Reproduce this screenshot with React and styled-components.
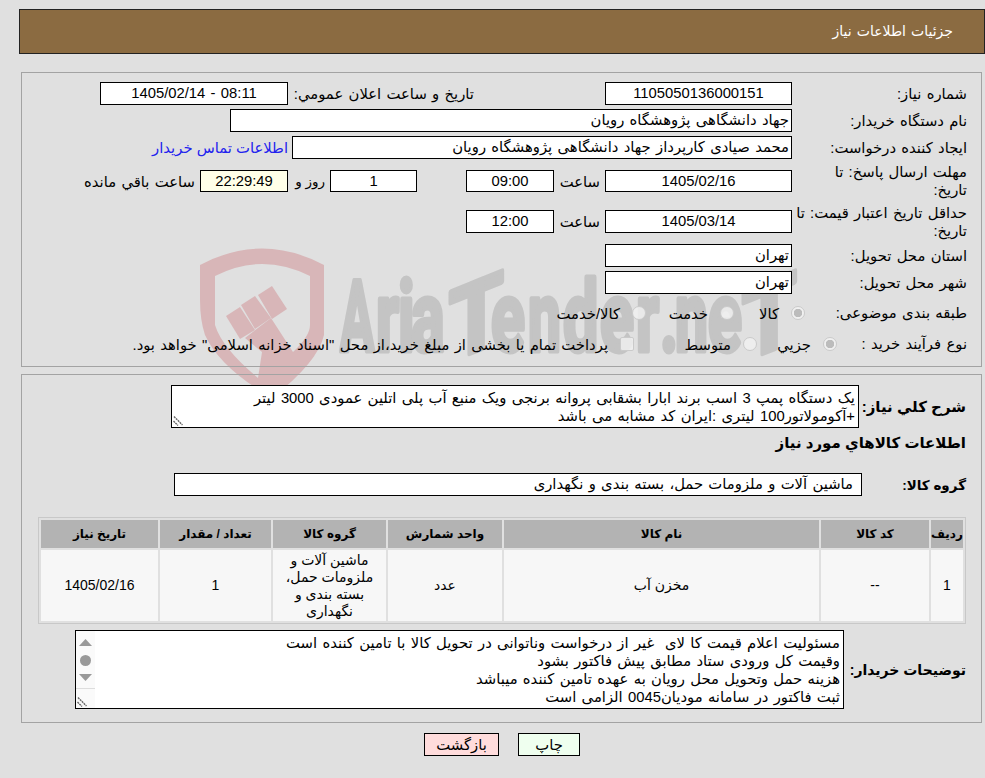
import styled, { createGlobalStyle } from "styled-components";

const GlobalStyle = createGlobalStyle`
  html, body { margin:0; padding:0; background:#e0e0e0; }
  body { font-family:"Liberation Sans","DejaVu Sans",sans-serif; font-size:14.8px; word-spacing:1.2px; color:#000; }
`;

const goods = [
  { row: "1", code: "--", name: "مخزن آب", unit: "عدد", group: "ماشین آلات و ملزومات حمل، بسته بندی و نگهداری", count: "1", date: "1405/02/16" },
];

// حروف لوگو
const logoLetters = [
  { c: "A", x: 340, sx: 0.52 },
  { c: "r", x: 376, sx: 0.64 },
  { c: "i", x: 398, sx: 0.64 },
  { c: "a", x: 411, sx: 0.64 },
  { c: "e", x: 491, sx: 0.64 },
  { c: "n", x: 528, sx: 0.6 },
  { c: "d", x: 563, sx: 0.64 },
  { c: "e", x: 600, sx: 0.64 },
  { c: "r", x: 636, sx: 0.64 },
  { c: ".", x: 660, sx: 0.64 },
  { c: "n", x: 675, sx: 0.6 },
  { c: "e", x: 708, sx: 0.64 },
];

const App = () => (
  <Page dir="rtl">
    <GlobalStyle />
    <Watermark />
    <TitleBar>جزئیات اطلاعات نیاز</TitleBar>
    <InfoPanel>
      <Row $h={27}>
        <Label>شماره نیاز:</Label>
        <Box $w={187}>1105050136000151</Box>
        <AnnounceLabel>تاریخ و ساعت اعلان عمومي:</AnnounceLabel>
        <Box $w={188}>08:11 - 1405/02/14</Box>
      </Row>
      <Row $h={27}>
        <Label>نام دستگاه خریدار:</Label>
        <Box $w={562} $start>جهاد دانشگاهی پژوهشگاه رویان</Box>
      </Row>
      <Row $h={27}>
        <Label>ایجاد کننده درخواست:</Label>
        <Box $w={500} $start>محمد صیادی کارپرداز جهاد دانشگاهی پژوهشگاه رویان</Box>
        <ContactLink href="#">اطلاعات تماس خریدار</ContactLink>
      </Row>
      <Row $h={40}>
        <Label>مهلت ارسال پاسخ: تا<br />تاریخ:</Label>
        <Box $w={187} $h={22}>1405/02/16</Box>
        <HourLabel>ساعت</HourLabel>
        <Box $w={88} $h={22}>09:00</Box>
        <Spacer $w={49} />
        <Box $w={87} $h={22}>1</Box>
        <DayLabel>روز و</DayLabel>
        <Box $w={88} $h={22} $tint>22:29:49</Box>
        <RemainLabel>ساعت باقي مانده</RemainLabel>
      </Row>
      <Row $h={41}>
        <Label>حداقل تاریخ اعتبار قیمت: تا<br />تاریخ:</Label>
        <Box $w={187}>1405/03/14</Box>
        <HourLabel>ساعت</HourLabel>
        <Box $w={88}>12:00</Box>
      </Row>
      <Row $h={27}>
        <Label>استان محل تحویل:</Label>
        <Box $w={187} $start>تهران</Box>
      </Row>
      <Row $h={27}>
        <Label>شهر محل تحویل:</Label>
        <Box $w={187} $start>تهران</Box>
      </Row>
      <Row $h={34}>
        <Label>طبقه بندی موضوعی:</Label>
        <OptionList $pull={13}>
          <Option $w={71}><Radio defaultChecked disabled name="kind" /><span>کالا</span></Option>
          <Option $w={88}><Radio disabled name="kind" /><span>خدمت</span></Option>
          <Option><Radio disabled name="kind" /><span>کالا/خدمت</span></Option>
        </OptionList>
      </Row>
      <Row $h={28}>
        <Label>نوع فرآیند خرید :</Label>
        <OptionList $pull={45}>
          <Option $w={80}><Radio defaultChecked disabled name="proc" /><span>جزيي</span></Option>
          <Option $w={123}><Radio disabled name="proc" /><span>متوسط</span></Option>
          <Option><Check disabled /><span>پرداخت تمام یا بخشی از مبلغ خرید،از محل "اسناد خزانه اسلامی" خواهد بود.</span></Option>
        </OptionList>
      </Row>
    </InfoPanel>

    <DetailPanel>
      <DescRow>
        <BoldLabel $w={107}>شرح كلي نياز:</BoldLabel>
        <TextBox $w={688} $h={43}>
          <div>یک دستگاه پمپ 3 اسب برند ابارا بشقابی پروانه برنجی ویک منبع آب پلی اتلین عمودی 3000 لیتر</div>
          <div>+آکومولاتور100 لیتری :ایران کد مشابه می باشد</div>
          <Grip />
        </TextBox>
      </DescRow>
      <SectionTitle>اطلاعات كالاهاي مورد نياز</SectionTitle>
      <GroupRow>
        <BoldLabel $w={104} $size={13.5}>گروه کالا:</BoldLabel>
        <GroupBox>ماشین آلات و ملزومات حمل، بسته بندی و نگهداری</GroupBox>
      </GroupRow>
      <GoodsTable>
        <colgroup>
          <col style={{ width: 32 }} />
          <col style={{ width: 108 }} />
          <col style={{ width: 315 }} />
          <col style={{ width: 114 }} />
          <col style={{ width: 113 }} />
          <col style={{ width: 111 }} />
          <col style={{ width: 117 }} />
        </colgroup>
        <thead>
          <tr>
            <th>ردیف</th>
            <th>کد کالا</th>
            <th>نام کالا</th>
            <th>واحد شمارش</th>
            <th>گروه کالا</th>
            <th>تعداد / مقدار</th>
            <th>تاریخ نیاز</th>
          </tr>
        </thead>
        <tbody>
          {goods.map((item) => (
            <tr key={item.row}>
              <td>{item.row}</td>
              <td>{item.code}</td>
              <td>{item.name}</td>
              <td>{item.unit}</td>
              <td>{item.group}</td>
              <td>{item.count}</td>
              <td>{item.date}</td>
            </tr>
          ))}
        </tbody>
      </GoodsTable>
      <BuyerRow>
        <BoldLabel $w={122} $size={14}>توضیحات خریدار:</BoldLabel>
        <TextBox $w={769} $h={79}>
          <div>مسئولیت اعلام قیمت کا لای  غیر از درخواست وناتوانی در تحویل کالا با تامین کننده است</div>
          <div>وقیمت کل ورودی ستاد مطابق پیش فاکتور بشود</div>
          <div>هزینه حمل وتحویل محل رویان به عهده تامین کننده میباشد</div>
          <div>ثبت فاکتور در سامانه مودیان0045 الزامی است</div>
          <FakeScroll>
            <svg width="19" height="58" viewBox="0 0 19 58">
              <path d="M3 15 L9.5 8 L16 15 Z" fill="#999" />
              <circle cx="9.5" cy="29.5" r="5.5" fill="#999" />
              <path d="M3 43 L16 43 L9.5 50 Z" fill="#999" />
            </svg>
            <Grip />
          </FakeScroll>
        </TextBox>
      </BuyerRow>
    </DetailPanel>

    <Actions>
      <ActionButton $bg="#efffef" $w={62}>چاپ</ActionButton>
      <ActionButton $bg="#ffdcdc" $w={75}>بازگشت</ActionButton>
    </Actions>
  </Page>
);

export default App;

// دستگیره تغییر اندازه
const Grip = () => (
  <GripSvg width="10" height="10" viewBox="0 0 10 10">
    <path d="M1 0.5 L9.5 9" stroke="#666" strokeWidth="1.4" strokeDasharray="2 .7" />
    <path d="M0.5 5 L5 9.5" stroke="#666" strokeWidth="1.4" strokeDasharray="2 .7" />
  </GripSvg>
);

// لوگوی پس زمینه
const Watermark = () => (
  <WatermarkSvg width="985" height="400" viewBox="0 0 985 400" aria-hidden="true">
    <g fill="#d8b6b8">
      <path fillRule="evenodd" d="M200 265 Q262 232 324 265 L324 335 Q318 362 272 398 Q220 368 205 335 Q200 320 200 300 Z M215 276 L215 325 Q222 348 258 378 L262 352 L245 338 L271 318 L293 352 Q310 336 310 325 L310 276 Q262 252 215 276 Z" />
      <path d="M226 316 L240 307 L255 330 L240 339 Z" />
      <path d="M241 305 L255 296 L271 318 L255 329 Z" />
      <path d="M258 295 L272 286 L287 309 L272 319 Z" />
    </g>
    <g direction="ltr" fill="#c4c4c4" stroke="#c4c4c4" strokeWidth="5" strokeLinejoin="round" fontFamily="Roboto, sans-serif" fontWeight="700" fontSize="98">
      {logoLetters.map((l, idx) => (
        <text key={idx} transform={`translate(${l.x} 351) scale(${l.sx} 1)`}>{l.c}</text>
      ))}
      <text transform="translate(449 362) skewY(-22) scale(.9 1)">T</text>
      <text transform="translate(742 362) skewY(-22) scale(.9 1)">T</text>
    </g>
  </WatermarkSvg>
);

const Page = styled.div`
  position:relative;
  width:985px;
  height:778px;
  overflow:hidden;
  padding-top:9px;
  box-sizing:border-box;
`;
const WatermarkSvg = styled.svg`
  position:absolute;
  top:0;
  left:0;
`;
const TitleBar = styled.div`
  position:relative;
  box-sizing:border-box;
  height:45px;
  margin:0 0 0 19px;
  padding-right:31px;
  border:1px solid #222;
  background:#8b6b41;
  color:#fff;
  font-size:14px;
  line-height:43px;
`;
const Panel = styled.section`
  position:relative;
  box-sizing:border-box;
  width:961px;
  margin-left:21px;
  margin-right:3px;
  border:1px solid #a3a3a3;
`;
const InfoPanel = styled(Panel)`
  height:295px;
  margin-top:18px;
  padding:7px 0 0;
`;
const DetailPanel = styled(Panel)`
  height:349px;
  margin-top:7px;
  padding:0 15px 0 14px;
`;
const Row = styled.div`
  display:flex;
  align-items:center;
  height:${(p) => p.$h}px;
`;
const Label = styled.div`
  box-sizing:border-box;
  flex:none;
  width:189px;
  padding-right:14px;
  line-height:18px;
  text-align:right;
`;
const Box = styled.div`
  flex:none;
  box-sizing:border-box;
  width:${(p) => p.$w}px;
  height:${(p) => p.$h ?? 23}px;
  padding:0 2px;
  border:1px solid #000;
  background:${(p) => (p.$tint ? "#ffffe8" : "#fff")};
  line-height:${(p) => (p.$h ?? 23) - 2}px;
  text-align:${(p) => (p.$start ? "right" : "center")};
  white-space:nowrap;
`;
const AnnounceLabel = styled.div`
  flex:none;
  width:317px;
  padding-right:131px;
  box-sizing:border-box;
  white-space:nowrap;
`;
const ContactLink = styled.a`
  margin-right:4px;
  color:#2222ee;
  text-decoration:none;
  word-spacing:0;
  white-space:nowrap;
`;
const HourLabel = styled.div`
  flex:none;
  box-sizing:border-box;
  width:51px;
  padding-right:5px;
  white-space:nowrap;
`;
const Spacer = styled.div`
  flex:none;
  width:${(p) => p.$w}px;
`;
const DayLabel = styled.div`
  flex:none;
  box-sizing:border-box;
  width:42px;
  padding-right:5px;
  font-size:13.5px;
  word-spacing:0;
  white-space:nowrap;
`;
const RemainLabel = styled.div`
  margin-right:5px;
  white-space:nowrap;
`;
const OptionList = styled.div`
  display:flex;
  align-items:center;
  margin-right:-${(p) => p.$pull}px;
`;
const Option = styled.label`
  display:flex;
  align-items:center;
  flex:none;
  width:${(p) => (p.$w ? `${p.$w}px` : "auto")};
  gap:12px;
  white-space:nowrap;
`;
const Radio = styled.input.attrs({ type: "radio" })`
  appearance:none;
  flex:none;
  box-sizing:border-box;
  width:14px;
  height:14px;
  margin:0;
  border:1px solid #cacaca;
  border-radius:50%;
  background:${(p) => (p.defaultChecked ? "radial-gradient(circle, #bcbcbc 0 4px, #f0f0f0 4.5px)" : "rgba(240,240,240,.85)")};
`;
const Check = styled.input.attrs({ type: "checkbox" })`
  appearance:none;
  flex:none;
  box-sizing:border-box;
  width:14px;
  height:14px;
  margin:0;
  border:1px solid #cacaca;
  border-radius:2px;
  background:rgba(240,240,240,.85);
`;
const DescRow = styled.div`
  display:flex;
  align-items:center;
  margin-top:10px;
`;
const BoldLabel = styled.div`
  flex:none;
  box-sizing:border-box;
  width:${(p) => p.$w}px;
  font-size:${(p) => p.$size ?? 15}px;
  font-weight:700;
  word-spacing:0;
  white-space:nowrap;
`;
const TextBox = styled.div`
  position:relative;
  flex:none;
  box-sizing:border-box;
  width:${(p) => p.$w}px;
  height:${(p) => p.$h}px;
  padding:3px 3px 0;
  border:1px solid #000;
  background:#fff;
  line-height:18px;
  overflow:hidden;
  white-space:pre;
`;
const GripSvg = styled.svg`
  position:absolute;
  bottom:1px;
  left:1px;
`;
const FakeScroll = styled.div`
  position:absolute;
  top:0;
  bottom:0;
  left:0;
  width:19px;
  background:#fafafa;
  &::after {
    content:"";
    position:absolute;
    left:0;
    right:0;
    bottom:19px;
    border-top:1px solid #ddd;
  }
  svg {
    display:block;
  }
  ${GripSvg} {
    position:absolute;
  }
`;
const SectionTitle = styled.div`
  margin-top:6px;
  font-size:15px;
  font-weight:700;
  word-spacing:0;
  line-height:18px;
`;
const GroupRow = styled.div`
  display:flex;
  align-items:center;
  margin-top:21px;
`;
const GroupBox = styled.div`
  flex:none;
  box-sizing:border-box;
  width:688px;
  height:23px;
  padding-right:8px;
  border:1px solid #000;
  background:#fff;
  line-height:21px;
  white-space:nowrap;
`;
const GoodsTable = styled.table`
  box-sizing:border-box;
  width:928px;
  height:107px;
  margin-top:21px;
  border:1px solid #c8c8c8;
  border-spacing:2px;
  table-layout:fixed;
  th {
    height:28px;
    padding:0;
    background:#b3b3b3;
    font-size:12px;
    font-weight:700;
    word-spacing:0;
  }
  td {
    padding:0 8px;
    background:#f7f7f7;
    font-size:14px;
    word-spacing:0;
    line-height:17px;
    text-align:center;
  }
`;
const BuyerRow = styled.div`
  display:flex;
  align-items:center;
  margin-top:6px;
`;
const Actions = styled.div`
  position:relative;
  display:flex;
  justify-content:center;
  gap:19px;
  margin-top:10px;
  padding-left:19px;
`;
const ActionButton = styled.button`
  box-sizing:border-box;
  width:${(p) => p.$w}px;
  height:23px;
  padding:0;
  border:1px solid #000;
  background:${(p) => p.$bg};
  font:inherit;
  word-spacing:inherit;
  color:#000;
`;
